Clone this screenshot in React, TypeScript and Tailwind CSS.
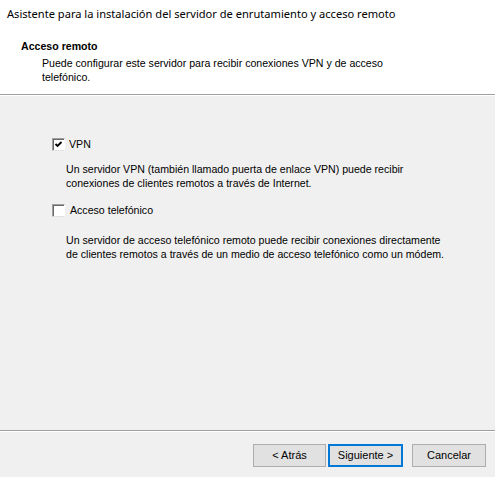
import React from "react";

function CheckBox({ checked }: { checked: boolean }) {
  return (
    <div className="w-[13px] h-[13px] bg-white border border-t-[#a0a0a0] border-l-[#a0a0a0] border-r-white border-b-[#e3e3e3] shadow-[inset_1px_1px_0_#696969] flex items-center justify-center shrink-0">
      {checked && (
        <svg width="9" height="9" viewBox="0 0 9 9">
          <path d="M1.5 4 L3.5 6 L7.5 2" stroke="#000" strokeWidth="1.8" fill="none" />
        </svg>
      )}
    </div>
  );
}

function Btn({ label, primary, w }: { label: string; primary?: boolean; w: string }) {
  return (
    <div
      className={
        "h-[23px] flex items-center justify-center bg-[#e1e1e1] text-[11px] text-black " +
        w +
        (primary ? " border-2 border-[#0078d7]" : " border border-[#adadad]")
      }
    >
      {label}
    </div>
  );
}

export default function App() {
  return (
    <div
      className="w-[495px] h-[477px] flex flex-col bg-[#f0f0f0] text-black overflow-hidden"
      style={{ fontFamily: '"Liberation Sans", Arial, sans-serif' }}
    >
      <div className="h-[94px] bg-white shrink-0">
        <div
          className="pl-[7px] pt-[6px] text-[11.1px] leading-[16px] text-black"
          style={{ fontFamily: '"Noto Sans", "Open Sans", sans-serif' }}
        >
          Asistente para la instalación del servidor de enrutamiento y acceso remoto
        </div>
        <div className="pl-[21px] pt-[18px] text-[10.6px] leading-[13px] font-bold">Acceso remoto</div>
        <div className="pl-[42px] pt-[3px] text-[10.6px] leading-[14px]">
          Puede configurar este servidor para recibir conexiones VPN y de acceso
          <br />
          telefónico.
        </div>
      </div>
      <div className="h-px bg-[#a0a0a0]" />
      <div className="h-px bg-white" />
      <div className="flex-1 flex flex-col pl-[52px] pt-[42px] text-[10.6px]">
        <div className="flex items-center h-[13px] gap-[4px]">
          <CheckBox checked />
          <span className="leading-[13px]">VPN</span>
        </div>
        <div className="pl-[14px] pt-[11px] leading-[14px]">
          Un servidor VPN (también llamado puerta de enlace VPN) puede recibir
          <br />
          conexiones de clientes remotos a través de Internet.
        </div>
        <div className="flex items-center h-[13px] gap-[5px] mt-[14px]">
          <CheckBox checked={false} />
          <span className="leading-[13px]">Acceso telefónico</span>
        </div>
        <div className="pl-[14px] pt-[16px] leading-[14px]">
          Un servidor de acceso telefónico remoto puede recibir conexiones directamente
          <br />
          de clientes remotos a través de un medio de acceso telefónico como un módem.
        </div>
      </div>
      <div className="h-px bg-[#a0a0a0]" />
      <div className="h-px bg-white" />
      <div className="h-[45px] flex justify-end items-start pt-[12px] pr-[9px]">
        <Btn label="< Atrás" w="w-[73px]" />
        <div className="w-[2px]" />
        <Btn label="Siguiente >" primary w="w-[75px]" />
        <div className="w-[9px]" />
        <Btn label="Cancelar" w="w-[74px]" />
      </div>
    </div>
  );
}
